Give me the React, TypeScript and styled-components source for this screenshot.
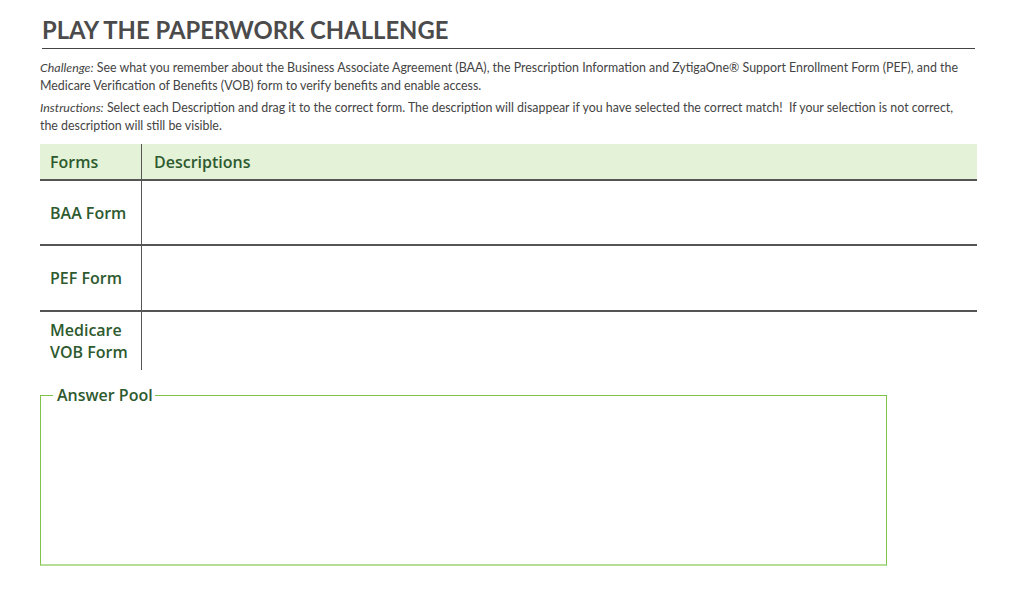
import React from "react";
import styled, { createGlobalStyle } from "styled-components";

const Global = createGlobalStyle`
  html, body { margin: 0; padding: 0; background: #fff; }
  body { font-family: "Lato", "Open Sans", sans-serif; }
`;

const Page = styled.div`
  width: 1024px;
  height: 600px;
  box-sizing: border-box;
  padding: 16px 46px 0 40px;
  display: flex;
  flex-direction: column;
`;

const Title = styled.h1`
  margin: 0 0 0 2px;
  padding: 0 0 4px 0;
  font-family: "Lato", sans-serif;
  font-weight: 700;
  font-size: 23.8px;
  line-height: 28px;
  color: #4b4b4b;
  border-bottom: 1px solid #444;
  width: 933px;
`;

const Para = styled.p<{ $top: number }>`
  margin: ${(p) => p.$top}px 0 0 0;
  font-family: "Lato", sans-serif;
  font-weight: 400;
  font-size: 12.4px;
  line-height: 18px;
  color: #444;
  width: 928px;
`;

const Lead = styled.em`
  font-style: italic;
`;

const Table = styled.div`
  margin-top: 9px;
  width: 937px;
  display: grid;
  grid-template-columns: 101px 1fr;
`;

const HeadCell = styled.div<{ $first?: boolean }>`
  background: #e4f2d8;
  height: 35px;
  display: flex;
  align-items: center;
  padding-left: ${(p) => (p.$first ? 10 : 12)}px;
  font-family: "Open Sans", sans-serif;
  font-weight: 600;
  font-size: 16px;
  color: #2e5a2f;
  border-bottom: 2px solid #555;
  border-left: ${(p) => (p.$first ? "none" : "1px solid #555")};
`;

const FormCell = styled.div<{ $last?: boolean; $h: number }>`
  height: ${(p) => p.$h}px;
  display: flex;
  align-items: center;
  padding-left: 10px;
  font-family: "Open Sans", sans-serif;
  font-weight: 600;
  font-size: 16px;
  line-height: 22px;
  color: #2e5a2f;
  border-bottom: ${(p) => (p.$last ? "none" : "2px solid #555")};
`;

const DescCell = styled.div<{ $last?: boolean; $h: number }>`
  height: ${(p) => p.$h}px;
  border-left: 1px solid #555;
  border-bottom: ${(p) => (p.$last ? "none" : "2px solid #555")};
`;

const Pool = styled.fieldset`
  margin: 14px 0 0 0;
  padding: 0;
  width: 847px;
  height: 182px;
  box-sizing: border-box;
  border: 1.5px solid #7fc24a;
  border-bottom-color: #b5dd95;
  border-bottom-width: 2px;
`;

const Legend = styled.legend`
  margin-left: 12px;
  padding: 0 2px 0 4px;
  font-family: "Open Sans", sans-serif;
  font-weight: 600;
  font-size: 16px;
  color: #2e5a2f;
`;

const rows = [
  { label: "BAA Form", h: 63 },
  { label: "PEF Form", h: 64 },
  { label: "Medicare VOB Form", h: 58 },
];

export default function App() {
  return (
    <>
      <Global />
      <Page>
        <Title>PLAY THE PAPERWORK CHALLENGE</Title>
        <Para $top={10}>
          <Lead>Challenge:</Lead> See what you remember about the Business Associate Agreement (BAA), the
          Prescription Information and ZytigaOne® Support Enrollment Form (PEF), and the Medicare
          Verification of Benefits (VOB) form to verify benefits and enable access.
        </Para>
        <Para $top={4}>
          <Lead>Instructions:</Lead> Select each Description and drag it to the correct form. The
          description will disappear if you have selected the correct match!&nbsp; If your selection is
          not correct, the description will still be visible.
        </Para>
        <Table>
          <HeadCell $first>Forms</HeadCell>
          <HeadCell>Descriptions</HeadCell>
          {rows.map((r, i) => (
            <React.Fragment key={r.label}>
              <FormCell $h={r.h} $last={i === rows.length - 1}>
                {r.label === "Medicare VOB Form" ? (
                  <span>
                    Medicare
                    <br />
                    VOB Form
                  </span>
                ) : (
                  r.label
                )}
              </FormCell>
              <DescCell $h={r.h} $last={i === rows.length - 1} />
            </React.Fragment>
          ))}
        </Table>
        <Pool>
          <Legend>Answer Pool</Legend>
        </Pool>
      </Page>
    </>
  );
}
